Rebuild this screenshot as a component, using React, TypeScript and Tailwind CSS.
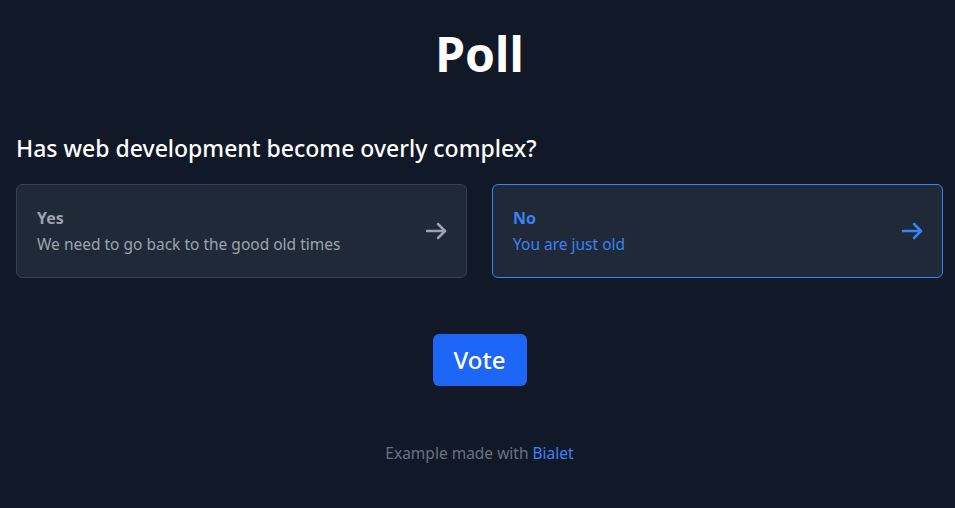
import { useState } from "react";

type Option = {
  id: string;
  title: string;
  text: string;
};

const options: Option[] = [
  { id: "yes", title: "Yes", text: "We need to go back to the good old times" },
  { id: "no", title: "No", text: "You are just old" },
];

const ArrowIcon = () => (
  <svg width="24" height="24" viewBox="0 0 24 24" fill="none" stroke="currentColor" strokeWidth="2.5" strokeLinecap="round" strokeLinejoin="round">
    <path d="M3 12h18" />
    <path d="M14 5l7 7-7 7" />
  </svg>
);

export default function App() {
  const [selected, setSelected] = useState<string>("no");

  return (
    <div
      className="min-h-screen w-full bg-[#111827] text-white pl-4 pr-3"
      style={{ fontFamily: '"Noto Sans", sans-serif' }}
    >
      <h1 className="pt-[22px] text-center text-[48px] font-bold leading-[64px]">Poll</h1>

      <h2 className="mt-[46px] text-[23px] font-medium leading-[32px]">
        Has web development become overly complex?
      </h2>

      <div className="mt-[20px] grid grid-cols-2 gap-[25px]">
        {options.map((opt) => {
          const active = selected === opt.id;
          return (
            <button
              key={opt.id}
              onClick={() => setSelected(opt.id)}
              className={
                "flex h-[94px] items-center justify-between rounded-md border bg-[#1f2937] pl-5 pr-[18px] text-left " +
                (active ? "border-[#3b82f6] text-[#3b82f6]" : "border-[#374151] text-[#9ca3af]")
              }
            >
              <div>
                <div className="text-[16px] font-bold leading-6">{opt.title}</div>
                <div className="mt-[2px] text-[15.5px] leading-6">{opt.text}</div>
              </div>
              <ArrowIcon />
            </button>
          );
        })}
      </div>

      <div className="mt-[56px] flex justify-center">
        <button className="h-[52px] w-[94px] rounded-md bg-[#1e66f5] text-[24px] font-medium text-white">
          Vote
        </button>
      </div>

      <p className="mt-[56px] text-center text-[15.5px] text-[#6b7280]">
        Example made with <a className="text-[#3b82f6]" href="#">Bialet</a>
      </p>
    </div>
  );
}
